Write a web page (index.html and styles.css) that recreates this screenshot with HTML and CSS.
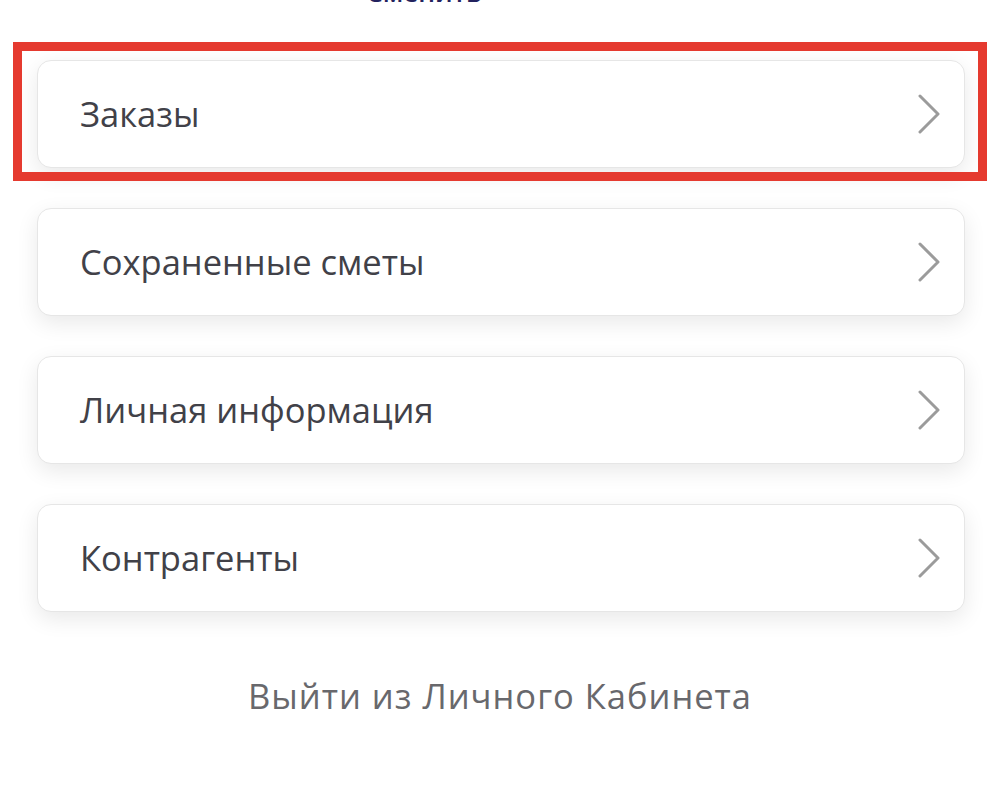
FILE: index.html
```html
<!DOCTYPE html>
<html lang="ru">
<head>
<meta charset="utf-8">
<link rel="stylesheet" href="styles.css">
</head>
<body>
<div class="page">
  <div class="top-link-wrap"><a class="top-link">Сменить</a></div>
  <nav class="menu">
    <a class="card">
      <span class="card-label">Заказы</span>
      <svg class="chev" viewBox="0 0 24 40" width="24" height="40"><path d="M3 2 L21 20 L3 38" fill="none" stroke="#9b9b9b" stroke-width="3" stroke-linecap="round" stroke-linejoin="round"/></svg>
    </a>
    <a class="card">
      <span class="card-label">Сохраненные сметы</span>
      <svg class="chev" viewBox="0 0 24 40" width="24" height="40"><path d="M3 2 L21 20 L3 38" fill="none" stroke="#9b9b9b" stroke-width="3" stroke-linecap="round" stroke-linejoin="round"/></svg>
    </a>
    <a class="card">
      <span class="card-label">Личная информация</span>
      <svg class="chev" viewBox="0 0 24 40" width="24" height="40"><path d="M3 2 L21 20 L3 38" fill="none" stroke="#9b9b9b" stroke-width="3" stroke-linecap="round" stroke-linejoin="round"/></svg>
    </a>
    <a class="card">
      <span class="card-label">Контрагенты</span>
      <svg class="chev" viewBox="0 0 24 40" width="24" height="40"><path d="M3 2 L21 20 L3 38" fill="none" stroke="#9b9b9b" stroke-width="3" stroke-linecap="round" stroke-linejoin="round"/></svg>
    </a>
  </nav>
  <div class="logout-wrap"><a class="logout">Выйти из Личного Кабинета</a></div>
  <div class="highlight"></div>
</div>
</body>
</html>
```
FILE: styles.css
```css
html, body {
  margin: 0;
  padding: 0;
  background: #ffffff;
}
.page {
  position: relative;
  width: 1000px;
  height: 790px;
  overflow: hidden;
  font-family: "Open Sans", "Noto Sans", sans-serif;
}
.top-link-wrap {
  display: flex;
  justify-content: center;
  height: 60px;
  padding-right: 152px;
}
.top-link {
  display: block;
  margin-top: -28px;
  font-size: 26px;
  line-height: 40px;
  height: 40px;
  font-weight: 600;
  color: #23225e;
}
.menu {
  display: flex;
  flex-direction: column;
  gap: 40px;
  padding: 0 35px 0 37px;
}
.card {
  display: flex;
  align-items: center;
  justify-content: space-between;
  box-sizing: border-box;
  height: 108px;
  padding: 0 23px 0 42px;
  background: #ffffff;
  border: 1px solid #e6e6e6;
  border-radius: 14px;
  box-shadow: 0 7px 22px rgba(0, 0, 0, 0.09);
}
.card-label {
  font-size: 34.5px;
  color: #414148;
  line-height: 40px;
}
.chev {
  display: block;
}
.logout-wrap {
  display: flex;
  justify-content: center;
  padding-top: 64px;
}
.logout {
  font-size: 34.5px;
  line-height: 40px;
  letter-spacing: 1px;
  color: #68686c;
}
.highlight {
  position: absolute;
  left: 13px;
  top: 42px;
  width: 974px;
  height: 139px;
  box-sizing: border-box;
  border: 9px solid #e53a2f;
}
```
